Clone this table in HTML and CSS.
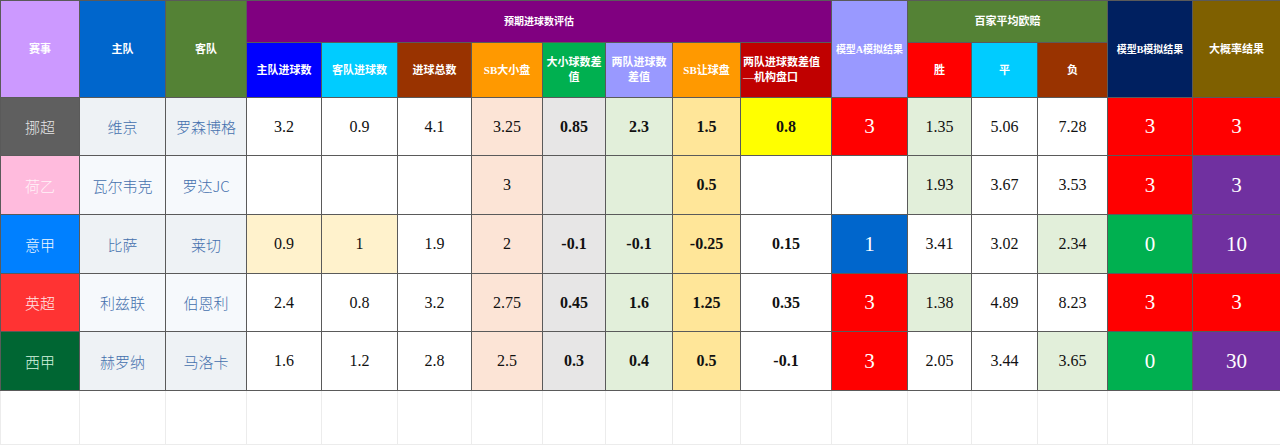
FILE: index.html
```html
<!DOCTYPE html>
<html lang="zh">
<head>
<meta charset="utf-8">
<title>预期进球数评估</title>
<link rel="stylesheet" href="styles.css">
</head>
<body>
<table class="sheet">
  <colgroup>
    <col class="w79"><col class="w86"><col class="w81"><col class="w75"><col class="w76"><col class="w74"><col class="w71"><col class="w63"><col class="w67"><col class="w68"><col class="w91"><col class="w76"><col class="w64"><col class="w66"><col class="w70"><col class="w85"><col class="w88">
  </colgroup>
  <thead>
    <tr class="h1">
      <th rowspan="2" class="bg-lilac">赛事</th>
      <th rowspan="2" class="bg-blue">主队</th>
      <th rowspan="2" class="bg-olivegreen">客队</th>
      <th colspan="8" class="bg-purple sm">预期进球数评估</th>
      <th rowspan="2" class="bg-periwinkle sm">模型A模拟结果</th>
      <th colspan="3" class="bg-olivegreen">百家平均欧赔</th>
      <th rowspan="2" class="bg-navy sm">模型B模拟结果</th>
      <th rowspan="2" class="bg-olive">大概率结果</th>
    </tr>
    <tr class="h2">
      <th class="bg-pureblue">主队进球数</th>
      <th class="bg-cyan">客队进球数</th>
      <th class="bg-brown">进球总数</th>
      <th class="bg-orange">SB大小盘</th>
      <th class="bg-green">大小球数差值</th>
      <th class="bg-periwinkle">两队进球数差值</th>
      <th class="bg-orange">SB让球盘</th>
      <th class="bg-darkred left">两队进球数差值<br>—机构盘口</th>
      <th class="bg-red">胜</th>
      <th class="bg-cyan">平</th>
      <th class="bg-brown">负</th>
    </tr>
  </thead>
  <tbody>
    <tr class="r58">
      <td class="league lg-gray">挪超</td>
      <td class="team t-a">维京</td>
      <td class="team t-a">罗森博格</td>
      <td class="num">3.2</td>
      <td class="num">0.9</td>
      <td class="num">4.1</td>
      <td class="num c-peach">3.25</td>
      <td class="num b c-gray">0.85</td>
      <td class="num b c-lgreen">2.3</td>
      <td class="num b c-sand">1.5</td>
      <td class="num b c-yellow">0.8</td>
      <td class="big c-red">3</td>
      <td class="num c-lgreen">1.35</td>
      <td class="num">5.06</td>
      <td class="num">7.28</td>
      <td class="big c-red">3</td>
      <td class="big c-red">3</td>
    </tr>
    <tr class="r59">
      <td class="league lg-pink">荷乙</td>
      <td class="team t-b">瓦尔韦克</td>
      <td class="team t-b">罗达JC</td>
      <td class="num"></td>
      <td class="num"></td>
      <td class="num"></td>
      <td class="num c-peach">3</td>
      <td class="num b c-gray"></td>
      <td class="num b c-lgreen"></td>
      <td class="num b c-sand">0.5</td>
      <td class="num b"></td>
      <td class="big"></td>
      <td class="num c-lgreen">1.93</td>
      <td class="num">3.67</td>
      <td class="num">3.53</td>
      <td class="big c-red">3</td>
      <td class="big c-violet">3</td>
    </tr>
    <tr class="r59">
      <td class="league lg-blue">意甲</td>
      <td class="team t-a">比萨</td>
      <td class="team t-a">莱切</td>
      <td class="num c-cream">0.9</td>
      <td class="num c-cream">1</td>
      <td class="num">1.9</td>
      <td class="num c-peach">2</td>
      <td class="num b c-gray">-0.1</td>
      <td class="num b c-lgreen">-0.1</td>
      <td class="num b c-sand">-0.25</td>
      <td class="num b">0.15</td>
      <td class="big c-blue">1</td>
      <td class="num">3.41</td>
      <td class="num">3.02</td>
      <td class="num c-lgreen">2.34</td>
      <td class="big c-green">0</td>
      <td class="big c-violet">10</td>
    </tr>
    <tr class="r58">
      <td class="league lg-red">英超</td>
      <td class="team t-b">利兹联</td>
      <td class="team t-b">伯恩利</td>
      <td class="num">2.4</td>
      <td class="num">0.8</td>
      <td class="num">3.2</td>
      <td class="num c-peach">2.75</td>
      <td class="num b c-gray">0.45</td>
      <td class="num b c-lgreen">1.6</td>
      <td class="num b c-sand">1.25</td>
      <td class="num b">0.35</td>
      <td class="big c-red">3</td>
      <td class="num c-lgreen">1.38</td>
      <td class="num">4.89</td>
      <td class="num">8.23</td>
      <td class="big c-red">3</td>
      <td class="big c-red">3</td>
    </tr>
    <tr class="r59">
      <td class="league lg-green">西甲</td>
      <td class="team t-a">赫罗纳</td>
      <td class="team t-a">马洛卡</td>
      <td class="num">1.6</td>
      <td class="num">1.2</td>
      <td class="num">2.8</td>
      <td class="num c-peach">2.5</td>
      <td class="num b c-gray">0.3</td>
      <td class="num b c-lgreen">0.4</td>
      <td class="num b c-sand">0.5</td>
      <td class="num b">-0.1</td>
      <td class="big c-red">3</td>
      <td class="num">2.05</td>
      <td class="num">3.44</td>
      <td class="num c-lgreen">3.65</td>
      <td class="big c-green">0</td>
      <td class="big c-violet">30</td>
    </tr>
    <tr class="blank">
      <td></td><td></td><td></td><td></td><td></td><td></td><td></td><td></td><td></td><td></td><td></td><td></td><td></td><td></td><td></td><td></td><td></td>
    </tr>
  </tbody>
</table>
</body>
</html>
```

FILE: styles.css
```css
html, body {
  margin: 0;
  padding: 0;
  background: #ffffff;
}

.sheet {
  border-collapse: collapse;
  table-layout: fixed;
  width: 1280px;
  font-family: "Liberation Serif", "Noto Sans CJK SC", serif;
}

.w79 { width: 79px; }
.w86 { width: 86px; }
.w81 { width: 81px; }
.w75 { width: 75px; }
.w76 { width: 76px; }
.w74 { width: 74px; }
.w71 { width: 71px; }
.w63 { width: 63px; }
.w67 { width: 67px; }
.w68 { width: 68px; }
.w91 { width: 91px; }
.w64 { width: 64px; }
.w66 { width: 66px; }
.w70 { width: 70px; }
.w85 { width: 85px; }
.w88 { width: 88px; }

.sheet th,
.sheet td {
  border: 1px solid #5a5a5a;
  padding: 0 2px;
  text-align: center;
  vertical-align: middle;
  overflow: hidden;
}

.sheet th {
  color: #ffffff;
  font-size: 11px;
  font-weight: bold;
  line-height: 15px;
}

.sheet th.sm {
  font-size: 10px;
  padding: 0 1px;
  white-space: nowrap;
}

.sheet th.left {
  text-align: left;
  padding-left: 2px;
}

.h1 { height: 42px; }
.h2 { height: 55px; }
.r58 { height: 58px; }
.r59 { height: 59px; }
.blank { height: 54px; }

.sheet .blank td {
  border: 1px solid #ececec;
  border-top-color: #5a5a5a;
}

/* header backgrounds */
.bg-lilac { background: #cc99ff; }
.bg-blue { background: #0066cc; }
.bg-olivegreen { background: #548235; }
.bg-purple { background: #800080; }
.bg-periwinkle { background: #9999ff; }
.bg-navy { background: #002060; }
.bg-olive { background: #7f6000; }
.bg-pureblue { background: #0000ff; }
.bg-cyan { background: #00ccff; }
.bg-brown { background: #993300; }
.bg-orange { background: #ff9900; }
.bg-green { background: #00b050; }
.bg-darkred { background: #c00000; }
.bg-red { background: #ff0000; }

/* data cells */
.league {
  font-size: 15px;
  color: #eeeeee;
  font-family: "Noto Sans CJK SC", sans-serif;
  font-weight: 300;
}
.lg-gray { background: #5f5f5f; color: #e4e4e4; }
.lg-pink { background: #ffbbdd; color: #fff3f8; }
.lg-blue { background: #0080ff; color: #f4f8ff; }
.lg-red { background: #ff3333; color: #ffe6e6; }
.lg-green { background: #006633; color: #d8f5e0; }

.team {
  font-size: 15px;
  color: #4470ad;
  font-family: "Noto Sans CJK SC", sans-serif;
  font-weight: 300;
}
.t-a { background: #eef2f5; }
.t-b { background: #f6f9fc; }

.num {
  font-size: 16px;
  color: #111111;
  background: #ffffff;
}
.num.b { font-weight: bold; }

.big {
  font-size: 21px;
  color: #ffffff;
  background: #ffffff;
}

.c-peach { background: #fce4d6; }
.c-gray { background: #e7e6e6; }
.c-lgreen { background: #e2efda; }
.c-sand { background: #ffe699; }
.c-yellow { background: #ffff00; }
.c-cream { background: #fff2cc; }
.c-red { background: #ff0000; }
.c-blue { background: #0066cc; }
.c-green { background: #00b050; }
.c-violet { background: #7030a0; }
```
